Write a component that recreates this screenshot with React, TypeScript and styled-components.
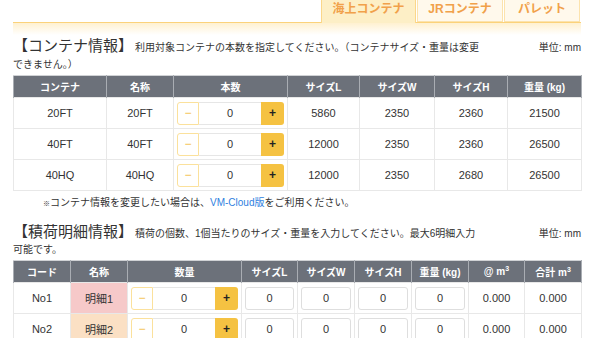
import React from "react";
import styled, { createGlobalStyle } from "styled-components";

const GlobalStyle = createGlobalStyle`
  html, body { margin: 0; padding: 0; background: #fff; }
  body {
    font-family: "Liberation Sans", "Noto Sans CJK JP", sans-serif;
    color: #333;
    overflow: hidden;
  }
`;

const Page = styled.div`
  width: 568px;
  padding-left: 13px;
`;

const TabBar = styled.div`
  display: flex;
  justify-content: flex-end;
  height: 22px;
  border-bottom: 1px solid #fbd27a;
  padding-right: 1px;
`;

const Tab = styled.div<{ $active?: boolean; $w: number }>`
  width: ${(p) => p.$w}px;
  box-sizing: border-box;
  height: ${(p) => (p.$active ? 23 : 22)}px;
  margin-bottom: ${(p) => (p.$active ? -1 : 0)}px;
  background: ${(p) => (p.$active ? "#fdefc6" : "#fff9ec")};
  border: 1px solid ${(p) => (p.$active ? "#fbd78a" : "#fce3ad")};
  border-top: none;
  border-bottom: ${(p) => (p.$active ? "none" : "1px solid #fce3ad")};
  color: #f1a14a;
  font-weight: bold;
  font-size: 12px;
  line-height: 14px;
  padding-top: 2px;
  text-align: center;
  & + & { margin-left: 1px; }
`;

const Glow = styled.div`
  height: 12px;
  background: linear-gradient(#fff1d0, #ffffff);
`;

const Section = styled.div<{ $mt: number }>`
  margin-top: ${(p) => p.$mt}px;
`;

const Intro = styled.div<{ $tight?: boolean }>`
  font-size: 10px;
  line-height: 16px;
  color: #333;
`;

const Unit = styled.span<{ $tight?: boolean }>`
  float: right;
  font-size: 10px;
  line-height: ${(p) => (p.$tight ? 16 : 22)}px;
  padding-top: 2px;
`;

const Title = styled.span<{ $tight?: boolean }>`
  font-size: 15px;
  line-height: ${(p) => (p.$tight ? 15 : 22)}px;
  color: #333;
  margin-right: 2px;
`;

const Table = styled.table`
  width: 568px;
  border-collapse: collapse;
  table-layout: fixed;
  margin-top: 2px;
  font-size: 11px;
`;

const Th = styled.th`
  background: #6c717a;
  color: #fff;
  font-weight: bold;
  font-size: 10px;
  height: 21px;
  padding: 0;
  border: 1px solid #a9adb3;
  border-top-color: #d0d2d5;
  border-bottom: none;
  text-align: center;
  white-space: nowrap;
  sup { font-size: 7px; vertical-align: 4px; line-height: 0; }
`;

const Td = styled.td<{ $bg?: string; $h: number }>`
  height: ${(p) => p.$h}px;
  padding: 0;
  text-align: center;
  border: 1px solid #e8e8e8;
  background: ${(p) => p.$bg || "#fff"};
  color: #333;
`;

const Stepper = styled.div`
  display: flex;
  height: 23px;
  margin: 0 3px;
  box-sizing: border-box;
`;

const Minus = styled.div`
  width: 22px;
  box-sizing: border-box;
  border: 1px solid #fbe19c;
  border-radius: 3px 0 0 3px;
  color: #f4c04a;
  font-size: 12px;
  display: flex;
  align-items: center;
  justify-content: center;
  background: #fff;
`;

const Val = styled.div`
  flex: 1;
  box-sizing: border-box;
  border-top: 1px solid #e6e6e6;
  border-bottom: 1px solid #e6e6e6;
  display: flex;
  align-items: center;
  justify-content: center;
  font-size: 11px;
`;

const Plus = styled.div`
  width: 23px;
  background: #f5c242;
  border-radius: 0 3px 3px 0;
  color: #222;
  font-weight: bold;
  font-size: 12px;
  display: flex;
  align-items: center;
  justify-content: center;
`;

const Box = styled.div`
  height: 23px;
  margin: 0 3px;
  box-sizing: border-box;
  border: 1px solid #dedede;
  border-radius: 3px;
  display: flex;
  align-items: center;
  justify-content: center;
  font-size: 11px;
  background: #fff;
`;

const Note = styled.div`
  font-size: 10px;
  line-height: 14px;
  padding-left: 30px;
  margin-top: 5px;
  a { color: #2f7fe0; text-decoration: none; }
  small { font-size: 7px; }
`;

const StepCell = () => (
  <Stepper>
    <Minus>−</Minus>
    <Val>0</Val>
    <Plus>+</Plus>
  </Stepper>
);

const containers = [
  ["20FT", "20FT", "5860", "2350", "2360", "21500"],
  ["40FT", "40FT", "12000", "2350", "2360", "26500"],
  ["40HQ", "40HQ", "12000", "2350", "2680", "26500"],
];

const items = [
  { code: "No1", name: "明細1", bg: "#f6c9c9" },
  { code: "No2", name: "明細2", bg: "#fbe0c4" },
];

export default function App() {
  return (
    <Page>
      <GlobalStyle />
      <TabBar>
        <Tab $active $w={95}>海上コンテナ</Tab>
        <Tab $w={86}>JRコンテナ</Tab>
        <Tab $w={76}>パレット</Tab>
      </TabBar>
      <Glow />
      <Section $mt={0}>
        <Intro>
          <Unit>単位: mm</Unit>
          <Title>【コンテナ情報】</Title>
          利用対象コンテナの本数を指定してください。（コンテナサイズ・重量は変更
          <br />
          できません。）
        </Intro>
        <Table>
          <colgroup>
            <col style={{ width: 93 }} />
            <col style={{ width: 67 }} />
            <col style={{ width: 114 }} />
            <col style={{ width: 72 }} />
            <col style={{ width: 75 }} />
            <col style={{ width: 73 }} />
            <col style={{ width: 74 }} />
          </colgroup>
          <thead>
            <tr>
              <Th>コンテナ</Th>
              <Th>名称</Th>
              <Th>本数</Th>
              <Th>サイズL</Th>
              <Th>サイズW</Th>
              <Th>サイズH</Th>
              <Th>重量 (kg)</Th>
            </tr>
          </thead>
          <tbody>
            {containers.map((r) => (
              <tr key={r[0]}>
                <Td $h={30}>{r[0]}</Td>
                <Td $h={30}>{r[1]}</Td>
                <Td $h={30}>
                  <StepCell />
                </Td>
                <Td $h={30}>{r[2]}</Td>
                <Td $h={30}>{r[3]}</Td>
                <Td $h={30}>{r[4]}</Td>
                <Td $h={30}>{r[5]}</Td>
              </tr>
            ))}
          </tbody>
        </Table>
        <Note>
          <small>※</small>コンテナ情報を変更したい場合は、<a href="#">VM-Cloud版</a>をご利用ください。
        </Note>
      </Section>
      <Section $mt={13}>
        <Intro $tight>
          <Unit $tight>単位: mm</Unit>
          <Title $tight>【積荷明細情報】</Title>
          積荷の個数、1個当たりのサイズ・重量を入力してください。最大6明細入力
          <br />
          可能です。
        </Intro>
        <Table>
          <colgroup>
            <col style={{ width: 57 }} />
            <col style={{ width: 57 }} />
            <col style={{ width: 114 }} />
            <col style={{ width: 56 }} />
            <col style={{ width: 57 }} />
            <col style={{ width: 57 }} />
            <col style={{ width: 57 }} />
            <col style={{ width: 56 }} />
            <col style={{ width: 57 }} />
          </colgroup>
          <thead>
            <tr>
              <Th>コード</Th>
              <Th>名称</Th>
              <Th>数量</Th>
              <Th>サイズL</Th>
              <Th>サイズW</Th>
              <Th>サイズH</Th>
              <Th>重量 (kg)</Th>
              <Th>
                @ m<sup>3</sup>
              </Th>
              <Th>
                合計 m<sup>3</sup>
              </Th>
            </tr>
          </thead>
          <tbody>
            {items.map((it) => (
              <tr key={it.code}>
                <Td $h={30}>{it.code}</Td>
                <Td $h={30} $bg={it.bg}>
                  {it.name}
                </Td>
                <Td $h={30}>
                  <StepCell />
                </Td>
                <Td $h={30}>
                  <Box>0</Box>
                </Td>
                <Td $h={30}>
                  <Box>0</Box>
                </Td>
                <Td $h={30}>
                  <Box>0</Box>
                </Td>
                <Td $h={30}>
                  <Box>0</Box>
                </Td>
                <Td $h={30}>0.000</Td>
                <Td $h={30}>0.000</Td>
              </tr>
            ))}
          </tbody>
        </Table>
      </Section>
    </Page>
  );
}
